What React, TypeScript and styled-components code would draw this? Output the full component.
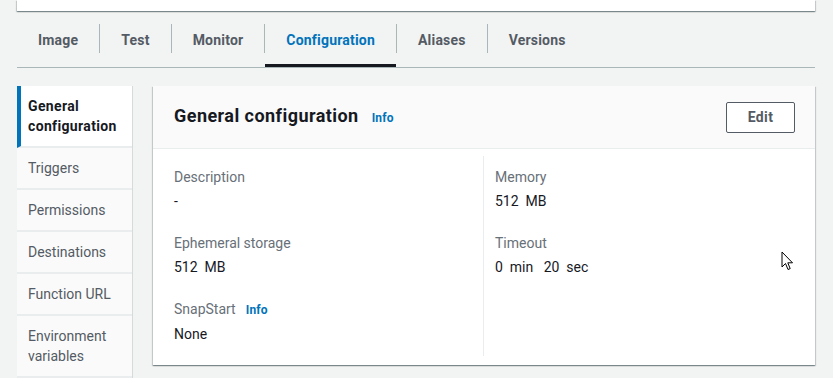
import React from 'react';
import styled, { createGlobalStyle } from 'styled-components';

const GlobalStyle = createGlobalStyle`
  html, body {
    margin: 0;
    padding: 0;
    background: #f2f3f3;
    font-family: Roboto, "Open Sans", Arial, sans-serif;
    font-size: 14px;
    color: #16191f;
  }
  * { box-sizing: border-box; }
`;

const Page = styled.div`
  position: relative;
  width: 833px;
  height: 378px;
  overflow: hidden;
  padding: 0 18px 0 17px;
`;

const TopCard = styled.div`
  height: 11px;
  background: #fff;
  box-shadow: 0 1px 1px 0 rgba(0, 28, 36, 0.3), 1px 1px 1px 0 rgba(0, 28, 36, 0.15),
    -1px 1px 1px 0 rgba(0, 28, 36, 0.15);
`;

const TabBar = styled.div`
  display: flex;
  margin-top: 13px;
  border-bottom: 1px solid #aab7b8;
  height: 44px;
`;

const TabLabel = styled.span<{ active?: boolean }>`
  display: block;
  padding: 6px 21px 0;
  height: 43px;
  font-weight: 700;
  font-size: 14px;
  line-height: 20px;
  letter-spacing: 0.2px;
  color: ${({ active }) => (active ? '#0073bb' : '#545b64')};
  border-bottom: 3px solid ${({ active }) => (active ? '#16191f' : 'transparent')};
`;

const Sep = styled.div`
  width: 1px;
  height: 29px;
  background: #aab7b8;
`;

const Layout = styled.div`
  display: flex;
  gap: 20px;
  margin-top: 18px;
  align-items: flex-start;
`;

const SideNav = styled.nav`
  width: 116px;
  flex: none;
  background: #fafafa;
  border-right: 1px solid #d5dbdb;
`;

const NavItem = styled.div<{ active?: boolean }>`
  padding: ${({ active }) => (active ? '10px 8px 10px 7px' : '10px 8px 10px 11px')};
  border-left: ${({ active }) => (active ? '4px solid #0073bb' : 'none')};
  background: ${({ active }) => (active ? '#fff' : '#fafafa')};
  border-bottom: 2px solid #eaeded;
  font-size: 14px;
  line-height: 20px;
  font-weight: ${({ active }) => (active ? 700 : 400)};
  letter-spacing: ${({ active }) => (active ? '0.35px' : '0')};
  color: ${({ active }) => (active ? '#16191f' : '#545b64')};
`;

const Card = styled.section`
  flex: 1;
  background: #fff;
  box-shadow: 0 1px 1px 0 rgba(0, 28, 36, 0.3), 1px 1px 1px 0 rgba(0, 28, 36, 0.15),
    -1px 1px 1px 0 rgba(0, 28, 36, 0.15);
`;

const CardHeader = styled.header`
  display: flex;
  align-items: center;
  justify-content: space-between;
  height: 63px;
  padding: 0 20px 0 21px;
  background: #fafafa;
  border-bottom: 1px solid #eaeded;
`;

const Title = styled.h2`
  margin: 0;
  display: flex;
  align-items: baseline;
  gap: 13px;
  font-size: 18px;
  line-height: 22px;
  font-weight: 700;
  letter-spacing: 0.45px;
  color: #16191f;
`;

const InfoLink = styled.a`
  font-size: 12px;
  font-weight: 700;
  letter-spacing: 0.2px;
  color: #0073bb;
  text-decoration: none;
`;

const EditButton = styled.button`
  width: 69px;
  height: 31px;
  background: #fff;
  border: 1px solid #545b64;
  border-radius: 2px;
  font-family: inherit;
  font-size: 14px;
  font-weight: 700;
  letter-spacing: 0.4px;
  color: #545b64;
`;

const CardBody = styled.div`
  display: grid;
  grid-template-columns: 309px 1fr;
  padding: 7px 20px 9px 21px;
`;

const Column = styled.div<{ divided?: boolean }>`
  display: flex;
  flex-direction: column;
  gap: 22px;
  padding: 11px 0 12px ${({ divided }) => (divided ? '11px' : '0')};
  ${({ divided }) => divided && 'border-left: 1px solid #eaeded;'}
  min-height: 196px;
`;

const Field = styled.div`
  display: flex;
  flex-direction: column;
  gap: 4px;
`;

const Label = styled.div`
  display: flex;
  align-items: baseline;
  gap: 10px;
  font-size: 14px;
  line-height: 20px;
  color: #687078;
`;

const Value = styled.div`
  font-size: 14px;
  line-height: 20px;
  color: #16191f;
  white-space: pre;
`;

const Cursor = styled.svg`
  position: absolute;
  left: 781px;
  top: 251px;
`;

const tabs = ['Image', 'Test', 'Monitor', 'Configuration', 'Aliases', 'Versions'];
const navItems = ['Triggers', 'Permissions', 'Destinations', 'Function URL', 'Environment variables'];

export default function App() {
  return (
    <Page>
      <GlobalStyle />
      <TopCard />
      <TabBar>
        {tabs.map((t, i) => (
          <React.Fragment key={t}>
            {i > 0 && <Sep />}
            <TabLabel active={t === 'Configuration'}>{t}</TabLabel>
          </React.Fragment>
        ))}
      </TabBar>
      <Layout>
        <SideNav>
          <NavItem active>General configuration</NavItem>
          {navItems.map((n) => (
            <NavItem key={n}>{n}</NavItem>
          ))}
        </SideNav>
        <Card>
          <CardHeader>
            <Title>
              General configuration <InfoLink>Info</InfoLink>
            </Title>
            <EditButton>Edit</EditButton>
          </CardHeader>
          <CardBody>
            <Column>
              <Field>
                <Label>Description</Label>
                <Value>-</Value>
              </Field>
              <Field>
                <Label>Ephemeral storage</Label>
                <Value>512  MB</Value>
              </Field>
              <Field>
                <Label>
                  SnapStart <InfoLink>Info</InfoLink>
                </Label>
                <Value>None</Value>
              </Field>
            </Column>
            <Column divided>
              <Field>
                <Label>Memory</Label>
                <Value>512  MB</Value>
              </Field>
              <Field>
                <Label>Timeout</Label>
                <Value>0  min   20  sec</Value>
              </Field>
            </Column>
          </CardBody>
        </Card>
      </Layout>
      <Cursor width="14" height="20" viewBox="0 0 14 20">
        <path d="M1 1 L1 16 L4.5 12.5 L7 18.5 L9.2 17.6 L6.8 11.8 L11.5 11.8 Z" fill="#fff" stroke="#000" strokeWidth="1" strokeLinejoin="round" />
      </Cursor>
    </Page>
  );
}
